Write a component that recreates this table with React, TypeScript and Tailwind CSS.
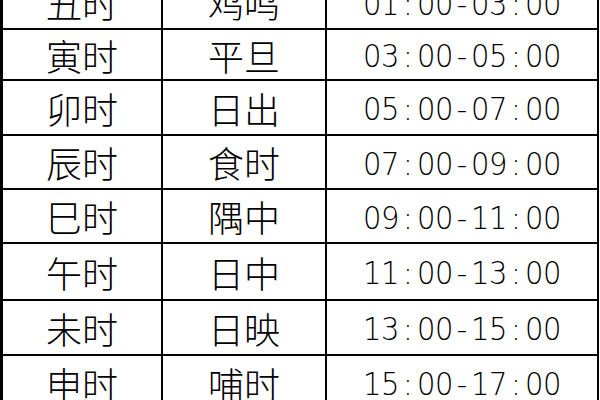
const rows = [
  { shi: "丑时", name: "鸡鸣", time: "01:00-03:00", h: "h-[54px]" },
  { shi: "寅时", name: "平旦", time: "03:00-05:00", h: "h-[51px]" },
  { shi: "卯时", name: "日出", time: "05:00-07:00", h: "h-[55px]" },
  { shi: "辰时", name: "食时", time: "07:00-09:00", h: "h-[54px]" },
  { shi: "巳时", name: "隅中", time: "09:00-11:00", h: "h-[54px]" },
  { shi: "午时", name: "日中", time: "11:00-13:00", h: "h-[57px]" },
  { shi: "未时", name: "日映", time: "13:00-15:00", h: "h-[55px]" },
  { shi: "申时", name: "哺时", time: "15:00-17:00", h: "h-[55px]" },
]

const cjk = "font-['Noto_Sans_CJK_SC',sans-serif] text-[36px] font-light leading-none text-black"

export default function App() {
  return (
    <div className="w-[600px] h-[400px] overflow-hidden bg-white">
      <div className="-mt-[24px] w-[599px] border-l-[3px] border-r-2 border-black">
        {rows.map((r) => (
          <div key={r.shi} className={`grid grid-cols-[160px_164px_1fr] border-b-2 border-black ${r.h}`}>
            <div className={`flex items-center justify-center border-r-2 border-black ${cjk}`}>{r.shi}</div>
            <div className={`flex items-center justify-center border-r-2 border-black ${cjk}`}>{r.name}</div>
            <div className="flex items-center justify-center pt-[4px] font-['DejaVu_Sans',sans-serif] text-[29px] font-extralight leading-none text-black">
              {r.time.split("").map((c, i) => (
                <span key={i} className="inline-block w-[18px] scale-y-[1.12] text-center">{c}</span>
              ))}
            </div>
          </div>
        ))}
      </div>
    </div>
  )
}
